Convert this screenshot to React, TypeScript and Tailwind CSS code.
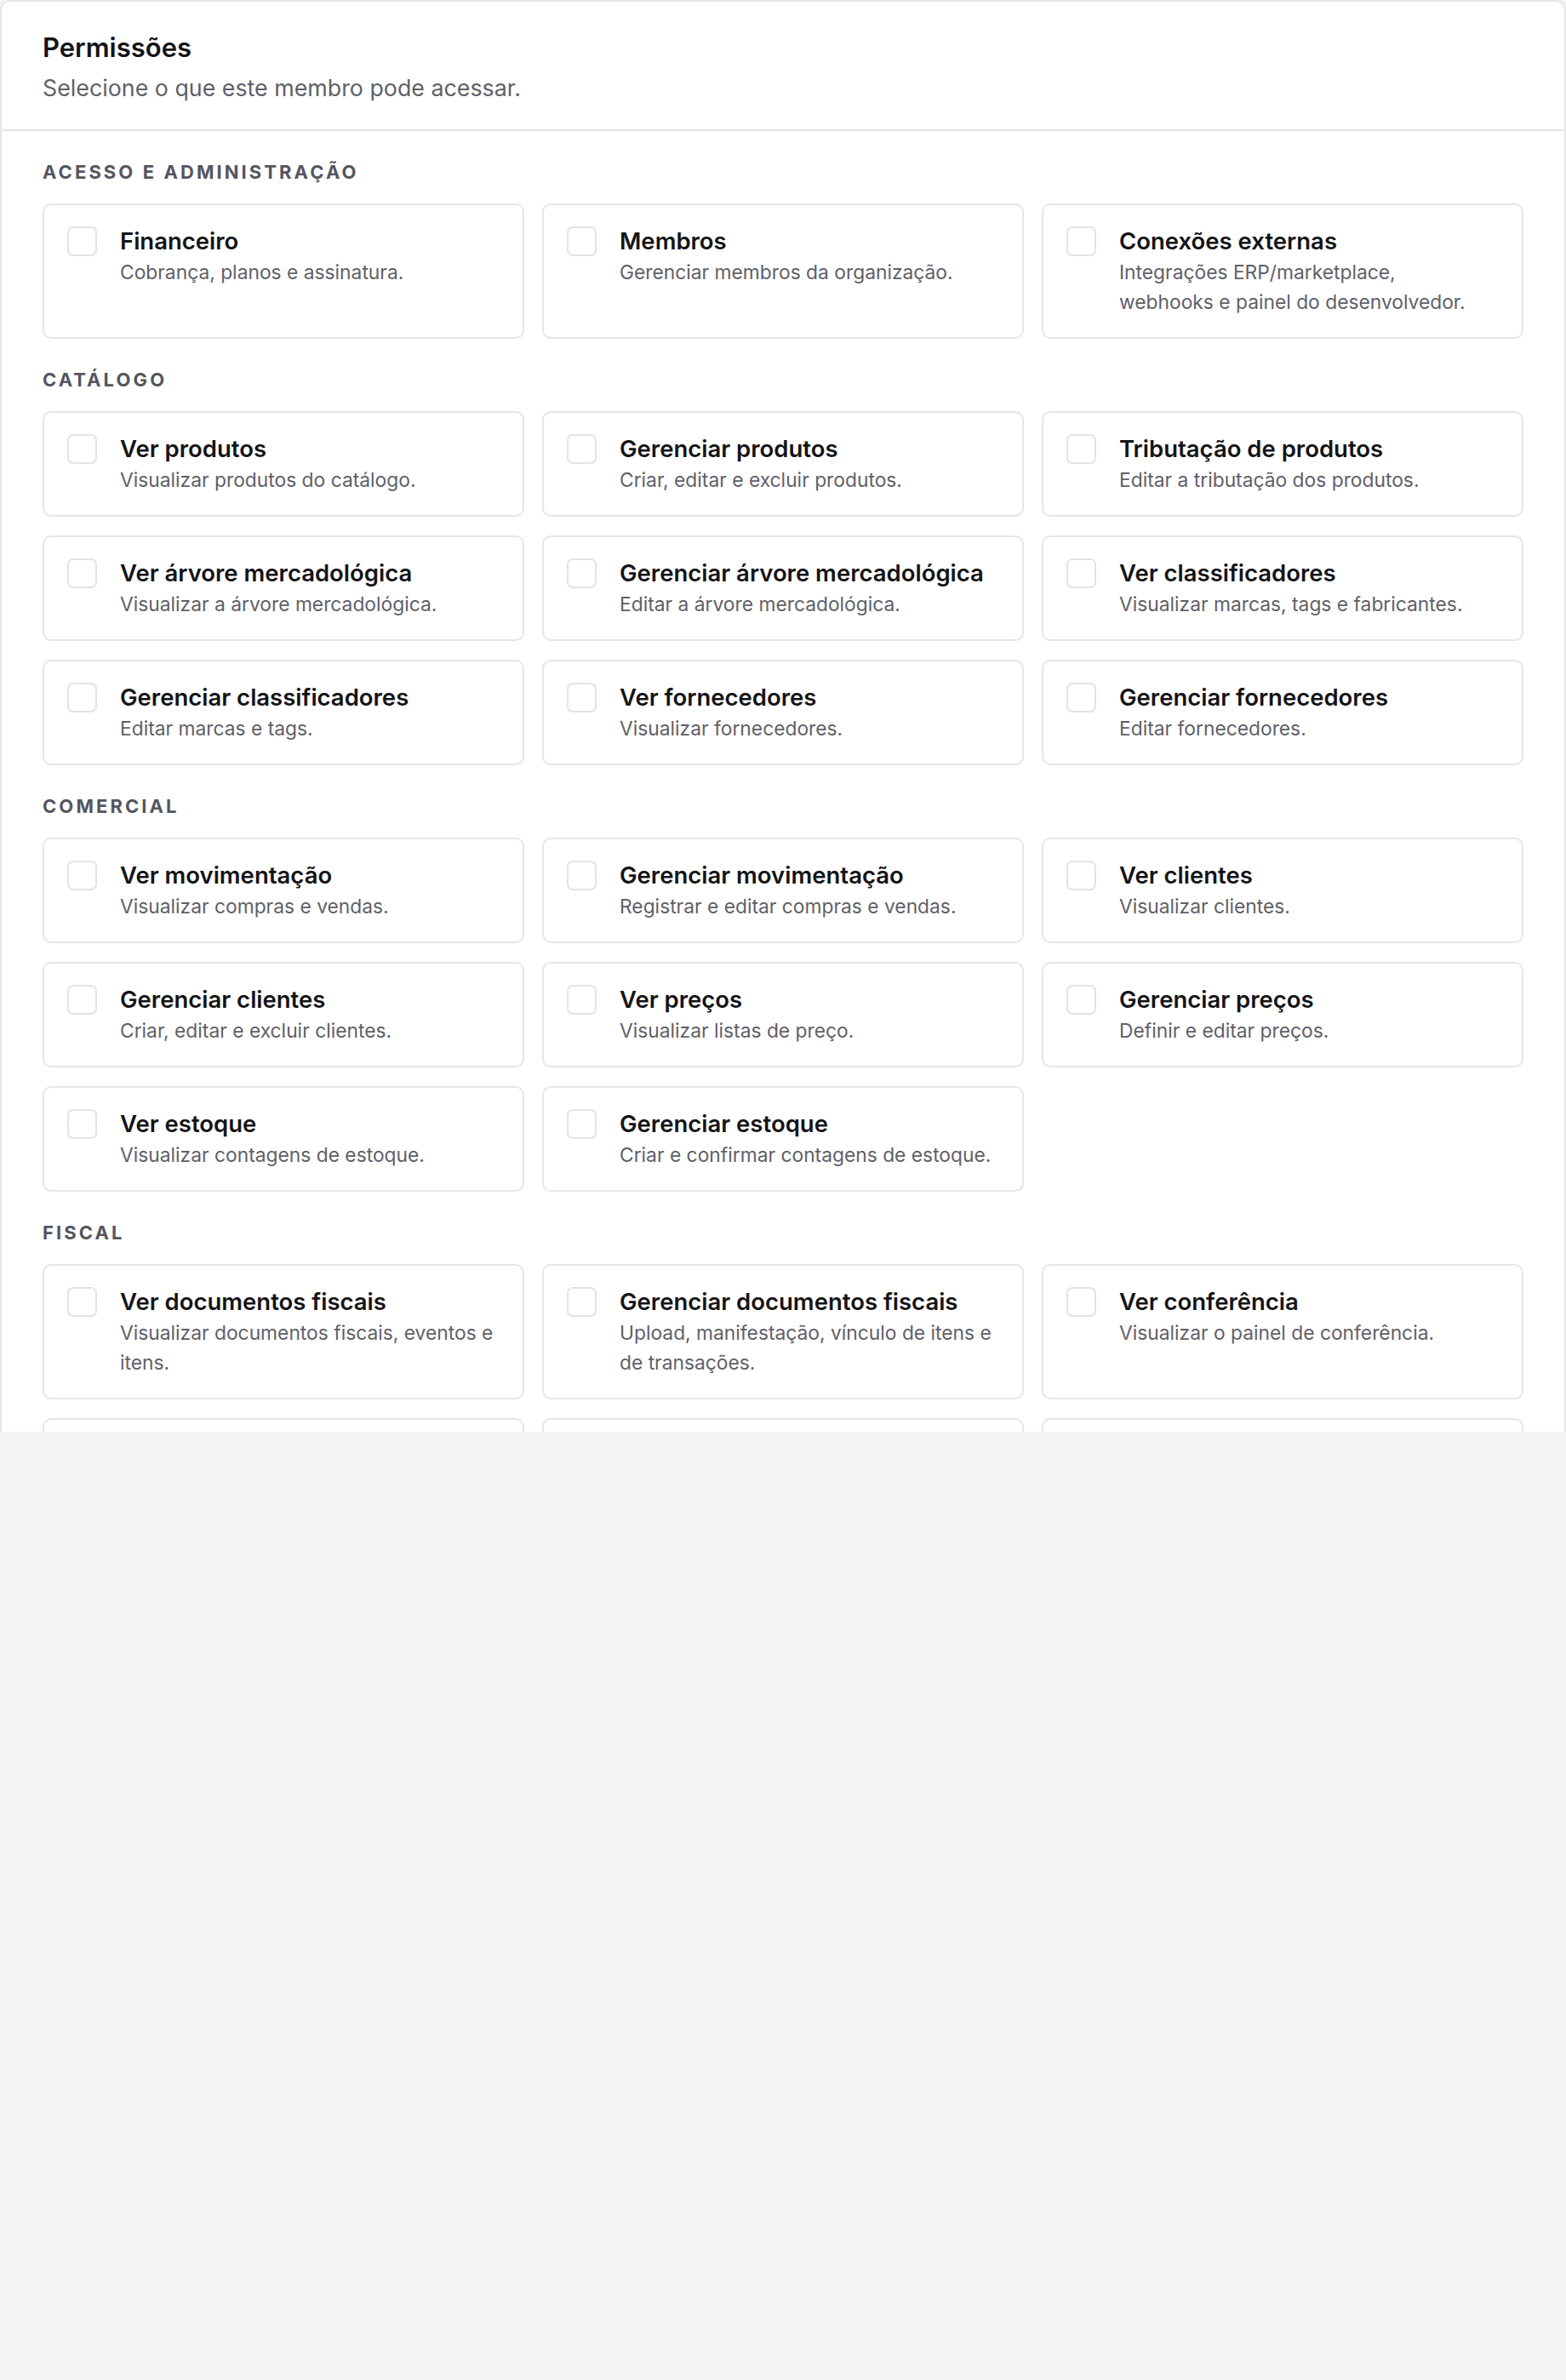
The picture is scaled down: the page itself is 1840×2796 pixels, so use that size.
import React, { useState } from 'react';

type Permission = {
  id: string;
  title: string;
  description: string;
};

type Section = {
  label: string;
  items: Permission[];
};

const SECTIONS: Section[] = [
  {
    label: 'Acesso e administração',
    items: [
      { id: 'billing', title: 'Financeiro', description: 'Cobrança, planos e assinatura.' },
      { id: 'members', title: 'Membros', description: 'Gerenciar membros da organização.' },
      {
        id: 'connections',
        title: 'Conexões externas',
        description: 'Integrações ERP/marketplace, webhooks e painel do desenvolvedor.',
      },
    ],
  },
  {
    label: 'Catálogo',
    items: [
      { id: 'products.view', title: 'Ver produtos', description: 'Visualizar produtos do catálogo.' },
      { id: 'products.manage', title: 'Gerenciar produtos', description: 'Criar, editar e excluir produtos.' },
      { id: 'products.tax', title: 'Tributação de produtos', description: 'Editar a tributação dos produtos.' },
      { id: 'tree.view', title: 'Ver árvore mercadológica', description: 'Visualizar a árvore mercadológica.' },
      { id: 'tree.manage', title: 'Gerenciar árvore mercadológica', description: 'Editar a árvore mercadológica.' },
      { id: 'classifiers.view', title: 'Ver classificadores', description: 'Visualizar marcas, tags e fabricantes.' },
      { id: 'classifiers.manage', title: 'Gerenciar classificadores', description: 'Editar marcas e tags.' },
      { id: 'suppliers.view', title: 'Ver fornecedores', description: 'Visualizar fornecedores.' },
      { id: 'suppliers.manage', title: 'Gerenciar fornecedores', description: 'Editar fornecedores.' },
    ],
  },
  {
    label: 'Comercial',
    items: [
      { id: 'movements.view', title: 'Ver movimentação', description: 'Visualizar compras e vendas.' },
      { id: 'movements.manage', title: 'Gerenciar movimentação', description: 'Registrar e editar compras e vendas.' },
      { id: 'customers.view', title: 'Ver clientes', description: 'Visualizar clientes.' },
      { id: 'customers.manage', title: 'Gerenciar clientes', description: 'Criar, editar e excluir clientes.' },
      { id: 'prices.view', title: 'Ver preços', description: 'Visualizar listas de preço.' },
      { id: 'prices.manage', title: 'Gerenciar preços', description: 'Definir e editar preços.' },
      { id: 'stock.view', title: 'Ver estoque', description: 'Visualizar contagens de estoque.' },
      { id: 'stock.manage', title: 'Gerenciar estoque', description: 'Criar e confirmar contagens de estoque.' },
    ],
  },
  {
    label: 'Fiscal',
    items: [
      {
        id: 'fiscal.view',
        title: 'Ver documentos fiscais',
        description: 'Visualizar documentos fiscais, eventos e itens.',
      },
      {
        id: 'fiscal.manage',
        title: 'Gerenciar documentos fiscais',
        description: 'Upload, manifestação, vínculo de itens e de transações.',
      },
      { id: 'review.view', title: 'Ver conferência', description: 'Visualizar o painel de conferência.' },
      { id: 'review.manage', title: 'Gerenciar conferência', description: 'Aprovar e rejeitar divergências.' },
      { id: 'taxes.view', title: 'Ver apuração', description: 'Visualizar a apuração de impostos.' },
      { id: 'taxes.manage', title: 'Gerenciar apuração', description: 'Fechar e reabrir períodos fiscais.' },
    ],
  },
];

const PermissionCard: React.FC<{
  item: Permission;
  checked: boolean;
  onToggle: () => void;
}> = ({ item, checked, onToggle }) => (
  <label className="flex cursor-pointer gap-[27px] rounded-[10px] border-2 border-[#e6e6e8] bg-white pt-[23px] pb-[24px] pl-[27px] pr-[32.5px]">
    <span
      className={
        checked
          ? 'mt-[2px] flex h-[35px] w-[35px] shrink-0 items-center justify-center rounded-[7px] border-2 border-[#18181b] bg-[#18181b]'
          : 'mt-[2px] flex h-[35px] w-[35px] shrink-0 items-center justify-center rounded-[7px] border-2 border-[#e3e3e6] bg-white'
      }
    >
      <input type="checkbox" className="sr-only" checked={checked} onChange={onToggle} />
      {checked && (
        <svg viewBox="0 0 24 24" className="h-[22px] w-[22px] text-white" fill="none" stroke="currentColor" strokeWidth={3}>
          <path d="M5 12l5 5L20 7" strokeLinecap="round" strokeLinejoin="round" />
        </svg>
      )}
    </span>
    <span className="flex min-w-0 flex-col">
      <span className="text-[27.5px] leading-[38px] font-semibold text-[#141417]">{item.title}</span>
      <span className="text-[22.8px] leading-[35px] text-[#5f5f69]">{item.description}</span>
    </span>
  </label>
);

export default function App() {
  const [selected, setSelected] = useState<Record<string, boolean>>({});

  const toggle = (id: string) => {
    setSelected((prev) => ({ ...prev, [id]: !prev[id] }));
  };

  return (
    <div className="min-h-screen bg-[#f4f4f4] font-['Inter','Liberation_Sans',sans-serif]">
      <div className="h-[1682px] overflow-hidden rounded-t-[12px] border-2 border-b-0 border-[#e6e6e8] bg-white">
        <div className="border-b-2 border-[#e6e6e8] px-[48px] pt-[34px] pb-[31px]">
          <h2 className="text-[31px] leading-[40px] font-semibold text-[#141417]">Permissões</h2>
          <p className="mt-[9px] text-[26.8px] leading-[36px] text-[#5f5f69]">Selecione o que este membro pode acessar.</p>
        </div>

        <div className="flex flex-col gap-[34px] px-[48px] pt-[34px]">
          {SECTIONS.map((section) => (
            <div key={section.label}>
              <h3 className="mb-[23px] text-[22px] leading-[28px] font-bold tracking-[0.14em] text-[#55555f] uppercase">
                {section.label}
              </h3>
              <div className="grid grid-cols-3 gap-x-[21px] gap-y-[22px]">
                {section.items.map((item) => (
                  <PermissionCard
                    key={item.id}
                    item={item}
                    checked={!!selected[item.id]}
                    onToggle={() => toggle(item.id)}
                  />
                ))}
              </div>
            </div>
          ))}
        </div>
      </div>
    </div>
  );
}
